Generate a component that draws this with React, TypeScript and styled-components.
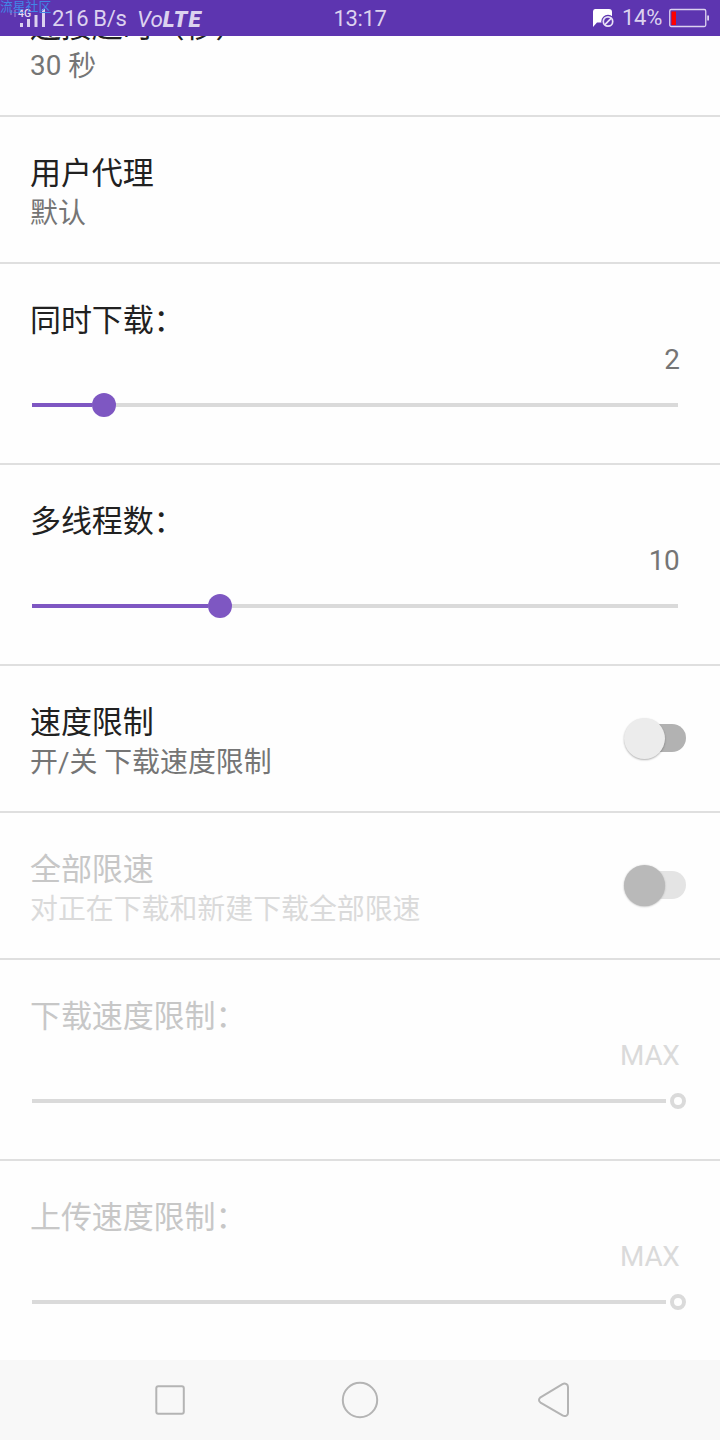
import React from "react";
import styled, { createGlobalStyle } from "styled-components";

const GlobalStyle = createGlobalStyle`
  * { box-sizing: border-box; }
  body { margin: 0; background: #fefefe; }
`;

const Screen = styled.div`
  display: flex;
  flex-direction: column;
  width: 720px;
  height: 1440px;
  overflow: hidden;
  background: #fefefe;
  font-family: Roboto, "Noto Sans CJK SC", sans-serif;
`;

const StatusBar = styled.header`
  position: relative;
  flex: none;
  height: 36px;
  display: grid;
  grid-template-columns: 1fr 54px 1fr;
  grid-template-rows: 36px;
  align-items: center;
  background: #5d35b0;
  color: #dcd2ef;
  font-size: 22px;
  line-height: 30px;
  white-space: nowrap;
`;

const StatusLeft = styled.div`
  display: flex;
  align-items: center;
`;

const StatusRight = styled.div`
  display: flex;
  align-items: center;
  justify-content: flex-end;
  padding-right: 10px;
`;

const Clock = styled.span`
  padding-top: 2px;
  letter-spacing: -0.4px;
  text-align: center;
`;

const NetworkSpeed = styled.span`
  width: 76px;
  margin-left: 6px;
  padding-top: 1px;
  letter-spacing: -0.3px;
`;

const VoLte = styled.span`
  margin-left: 9px;
  padding-top: 2px;
  font-size: 22.5px;
  font-style: italic;
  b { font-weight: 900; letter-spacing: 1.1px; }
`;

const BatteryText = styled.span`
  margin: 0 7px 0 8px;
  letter-spacing: -0.3px;
`;

const Watermark = styled.span`
  position: absolute;
  left: 0;
  top: 0;
  font-size: 12.8px;
  line-height: 14px;
  color: #4285e6;
`;

const Settings = styled.main`
  flex: 1;
  min-height: 0;
  overflow: hidden;
`;

const SettingsList = styled.div`
  margin-top: -66px;
`;

const Row = styled.section<{ $disabled?: boolean }>`
  display: flex;
  align-items: center;
  height: 147px;
  padding: 37px 34px 28px 30px;
  border-bottom: 2px solid #dfdfdf;
  color: ${(p) => (p.$disabled ? "#c7c7c7" : "#212121")};
`;

const SliderRow = styled(Row)`
  display: block;
  height: 201px;
  padding: 37px 42px 0 32px;
  &:last-child { border-bottom: 0; }
`;

const Labels = styled.div`
  flex: 1;
`;

const Title = styled.h2<{ $shift?: boolean }>`
  margin: 0;
  margin-left: ${(p) => (p.$shift ? "-2px" : "0")};
  height: 40px;
  font-size: 31px;
  font-weight: 400;
  line-height: 40px;
  letter-spacing: -0.1px;
`;

const Summary = styled.p<{ $disabled?: boolean }>`
  margin: 0;
  height: 40px;
  font-size: 27.9px;
  line-height: 40px;
  color: ${(p) => (p.$disabled ? "#dadada" : "#757575")};
`;

const Digits = styled.span`
  line-height: 1;
  vertical-align: 1px;
`;

const Value = styled(Summary)`
  margin: -1px -1.5px -1px 0;
  letter-spacing: -0.3px;
  text-align: right;
`;

const Slider = styled.div`
  display: flex;
  align-items: center;
  height: 52px;
`;

const Filled = styled.div`
  height: 4px;
  background: #7e57c2;
`;

const Rest = styled.div`
  flex: 1;
  height: 4px;
  background: #dadada;
`;

const Thumb = styled.div`
  width: 24px;
  height: 24px;
  border-radius: 50%;
  background: #7e57c2;
`;

const EndThumb = styled.div`
  width: 16px;
  height: 16px;
  margin: 0 -8px 0 4px;
  border: 4px solid #dadada;
  border-radius: 50%;
`;

const SwitchTrack = styled.div<{ $disabled?: boolean }>`
  display: flex;
  align-items: center;
  width: 56px;
  height: 28px;
  margin-top: -10px;
  border-radius: 14px;
  background: ${(p) => (p.$disabled ? "#e4e4e4" : "#b2b2b2")};
`;

const SwitchThumb = styled.div<{ $disabled?: boolean }>`
  flex: none;
  width: 41px;
  height: 41px;
  margin-left: -6px;
  border-radius: 50%;
  background: ${(p) => (p.$disabled ? "#b9b9b9" : "#ececec")};
  box-shadow: ${(p) => (p.$disabled ? "0 0.5px 2px #aaa" : "0 1px 2px rgba(0, 0, 0, 0.3)")};
`;

const NavBar = styled.nav`
  flex: none;
  height: 80px;
  display: grid;
  grid-template-columns: 190px 194px 40px;
  align-items: center;
  padding-left: 150px;
  background: #f8f8f8;
  svg { display: block; fill: none; stroke: #b4b4b4; stroke-width: 2; stroke-linejoin: round; }
`;

const SignalIcon = () => (
  <svg width="46" height="36" viewBox="0 0 46 36">
    <path d="M11 10v5M15 10v7" stroke="#8e70c8" strokeWidth="1.5" />
    <text x="18" y="16.500" fontSize="10.500" fontWeight="500" fill="#e5ddf4" fontFamily="Roboto, sans-serif">4G</text>
    <path d="M20 23h3v4h-3zM27 19h3v8h-3zM34.500 15h3v12h-3zM42 9h3v18h-3z" fill="#dcd2ef" />
  </svg>
);

const MessageBlockedIcon = () => (
  <svg width="22" height="36" viewBox="0 0 22 36">
    <path d="M3 9h14q3 0 3 3v10.500H5L1 27V11.500Q1 9 3 9z" fill="#fff" />
    <circle cx="16" cy="21.500" r="6.700" fill="#5d35b0" />
    <circle cx="16" cy="21.500" r="4.700" fill="none" stroke="#e9e2f6" strokeWidth="1.700" />
    <path d="M12.700 24.800l6.600-6.600" stroke="#e9e2f6" strokeWidth="1.700" />
  </svg>
);

const BatteryIcon = () => (
  <svg width="41" height="36" viewBox="0 0 41 36">
    <rect x="0.750" y="9.500" width="36" height="17" rx="1.500" fill="none" stroke="#dcd2ef" strokeWidth="1.300" />
    <rect x="2.500" y="11.500" width="4.500" height="13.500" fill="#f00" />
    <path d="M38.200 15.500h1.800v5h-1.800z" fill="#dcd2ef" />
  </svg>
);

type TextSettingProps = { title: string; summary: React.ReactNode; toggle?: boolean; disabled?: boolean };

const TextSetting = ({ title, summary, toggle, disabled }: TextSettingProps) => (
  <Row $disabled={disabled}>
    <Labels>
      <Title>{title}</Title>
      <Summary $disabled={disabled}>{summary}</Summary>
    </Labels>
    {toggle && (
      <SwitchTrack $disabled={disabled}>
        <SwitchThumb $disabled={disabled} />
      </SwitchTrack>
    )}
  </Row>
);

type SliderSettingProps = { title: string; value: string; filled?: number; disabled?: boolean };

const SliderSetting = ({ title, value, filled = 0, disabled }: SliderSettingProps) => (
  <SliderRow $disabled={disabled}>
    <Title $shift>{title}</Title>
    <Value $disabled={disabled}>{value}</Value>
    <Slider>
      {disabled ? (
        <>
          <Rest />
          <EndThumb />
        </>
      ) : (
        <>
          <Filled style={{ width: filled }} />
          <Thumb />
          <Rest />
        </>
      )}
    </Slider>
  </SliderRow>
);

export default function App() {
  return (
    <Screen>
      <GlobalStyle />
      <StatusBar>
        <StatusLeft>
          <SignalIcon />
          <NetworkSpeed>216 B/s</NetworkSpeed>
          <VoLte>Vo<b>LTE</b></VoLte>
        </StatusLeft>
        <Clock>13:17</Clock>
        <StatusRight>
          <MessageBlockedIcon />
          <BatteryText>14%</BatteryText>
          <BatteryIcon />
        </StatusRight>
        <Watermark>流星社区</Watermark>
      </StatusBar>
      <Settings>
        <SettingsList>
          <TextSetting title="连接超时（秒）" summary={<><Digits>30</Digits> 秒</>} />
          <TextSetting title="用户代理" summary="默认" />
          <SliderSetting title="同时下载：" value="2" filled={60} />
          <SliderSetting title="多线程数：" value="10" filled={176} />
          <TextSetting title="速度限制" summary="开/关 下载速度限制" toggle />
          <TextSetting title="全部限速" summary="对正在下载和新建下载全部限速" toggle disabled />
          <SliderSetting title="下载速度限制：" value="MAX" disabled />
          <SliderSetting title="上传速度限制：" value="MAX" disabled />
        </SettingsList>
      </Settings>
      <NavBar>
        <svg width="40" height="40" viewBox="0 0 40 40">
          <rect x="6.300" y="6.300" width="27.500" height="27.500" rx="2" />
        </svg>
        <svg width="40" height="40" viewBox="0 0 40 40">
          <circle cx="20" cy="20" r="17.200" />
        </svg>
        <svg width="40" height="40" viewBox="0 0 40 40">
          <path d="M6.500 17.300L28.500 4.200Q30.500 3 32.500 4.200Q34 5.200 34 7V33Q34 34.800 32.500 35.600Q30.500 36.600 28.500 35.400L6.500 22.600Q3.500 20 6.500 17.300z" />
        </svg>
      </NavBar>
    </Screen>
  );
}
